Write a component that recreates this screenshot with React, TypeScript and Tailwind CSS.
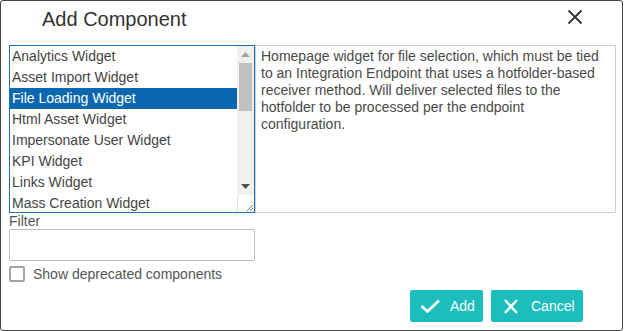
import React from "react";

const widgets = [
  "Analytics Widget",
  "Asset Import Widget",
  "File Loading Widget",
  "Html Asset Widget",
  "Impersonate User Widget",
  "KPI Widget",
  "Links Widget",
  "Mass Creation Widget",
];

const selected = "File Loading Widget";

const App: React.FC = () => {
  return (
    <div className="w-[623px] h-[331px] bg-white border border-[#454545] rounded-[3px] font-['Liberation_Sans',Arial,sans-serif] text-[#444]">
      {/* header */}
      <div className="flex items-start justify-between h-[44px] pl-[41px] pr-[39px] pt-[7px]">
        <h1 className="text-[20px] leading-[23px] text-[#333]">Add Component</h1>
        <svg width="16" height="16" viewBox="0 0 16 16" className="mt-[1px]">
          <path d="M1.5 1.5 L14.5 14.5 M14.5 1.5 L1.5 14.5" stroke="#333" strokeWidth="1.8" fill="none" />
        </svg>
      </div>

      {/* list + description */}
      <div className="flex ml-[8px]">
        <div className="flex w-[246px] h-[168px] border border-[#1a6fb5] overflow-hidden">
          <div className="w-[227px] text-[14px]">
            {widgets.map((item, index) => (
              <div
                key={index}
                className={
                  item === selected
                    ? "h-[21px] leading-[21px] pl-[2px] bg-[#0b68b0] text-white"
                    : "h-[21px] leading-[21px] pl-[2px]"
                }
              >
                {item}
              </div>
            ))}
          </div>
          <div className="w-[17px] flex flex-col bg-[#f0f0f0]">
            <div className="h-[17px] flex items-center justify-center">
              <svg width="9" height="5" viewBox="0 0 9 5">
                <polygon points="0,5 4.5,0 9,5" fill="#a3a3a3" />
              </svg>
            </div>
            <div className="h-[48px] mx-[2px] bg-[#c1c1c1]"></div>
            <div className="flex-1"></div>
            <div className="h-[17px] flex items-center justify-center">
              <svg width="9" height="5" viewBox="0 0 9 5">
                <polygon points="0,0 9,0 4.5,5" fill="#505050" />
              </svg>
            </div>
            <div className="h-[17px] bg-white border-l border-[#e3e3e3] flex items-end justify-end">
              <svg width="10" height="10" viewBox="0 0 10 10">
                <path d="M9 3 L3 9 M9 6 L6 9" stroke="#777" strokeWidth="1" fill="none" />
              </svg>
            </div>
          </div>
        </div>
        <div className="w-[361px] h-[168px] border border-[#cfcfcf] pl-[5px] pr-[4px] pt-[2px] text-[14px] leading-[17px] text-[#4a4a4a]">
          Homepage widget for file selection, which must be tied to an Integration Endpoint that uses a hotfolder-based
          receiver method. Will deliver selected files to the hotfolder to be processed per the endpoint configuration.
        </div>
      </div>

      {/* filter */}
      <div className="ml-[8px] mt-[1px] w-[246px]">
        <label className="block text-[14px] leading-[15px] text-[#555]">Filter</label>
        <input type="text" className="block w-[246px] h-[32px] border border-[#bdbdbd] rounded-[2px] outline-none" />
        <div className="flex items-center mt-[5px] h-[16px]">
          <span className="w-[16px] h-[16px] border-2 border-[#a3a3a3] rounded-[2px]"></span>
          <span className="ml-[8px] text-[14px] text-[#555]">Show deprecated components</span>
        </div>
      </div>

      {/* buttons */}
      <div className="flex justify-end gap-[8px] pr-[39px] mt-[8px]">
        <button className="flex items-center w-[73px] h-[32px] pl-[10px] bg-[#1bbdbd] rounded-[2px] text-white text-[14px]">
          <svg width="20" height="14" viewBox="0 0 20 14">
            <path d="M1.5 7 L7.5 12.5 L19 1.5" stroke="white" strokeWidth="2.6" fill="none" />
          </svg>
          <span className="ml-[10px]">Add</span>
        </button>
        <button className="flex items-center w-[92px] h-[32px] pl-[13px] bg-[#1bbdbd] rounded-[2px] text-white text-[14px]">
          <svg width="14" height="15" viewBox="0 0 14 15">
            <path d="M1 1 L13 14 M13 1 L1 14" stroke="white" strokeWidth="2.4" fill="none" />
          </svg>
          <span className="ml-[13px]">Cancel</span>
        </button>
      </div>
    </div>
  );
};

export default App;
